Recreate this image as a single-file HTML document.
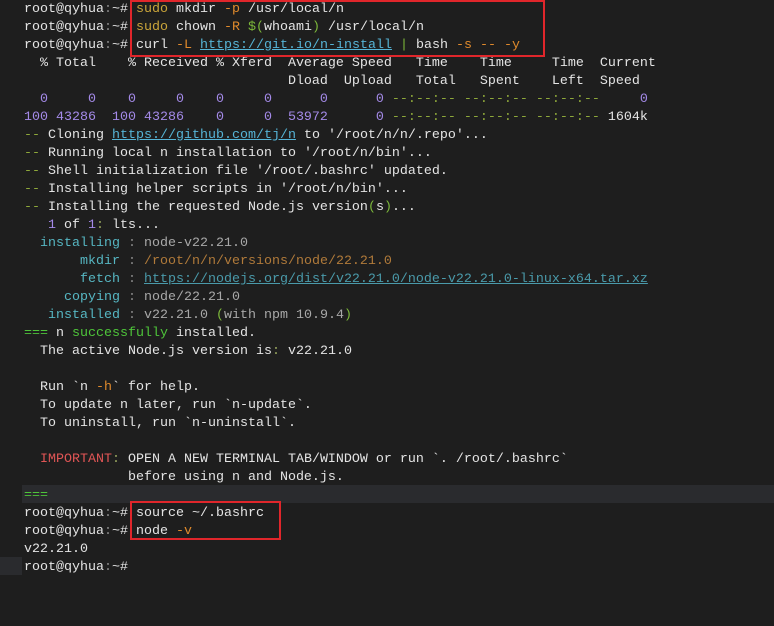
<!DOCTYPE html>
<html><head><meta charset="utf-8"><style>
html,body{margin:0;padding:0;background:#1e1e1e;width:774px;height:626px;overflow:hidden}
#t{position:absolute;left:24px;top:1px;font-family:"Liberation Mono",monospace;font-size:13.33px;line-height:18px;color:#e4e4e4;white-space:pre}
.y{color:#c9a43a}.o{color:#e08a2c}.g{color:#7cb83a}.u{color:#56b4d6;text-decoration:underline}
.p{color:#a48ae8}.d{color:#8ea83a}.c{color:#56b6c2}.s{color:#8a8a8a}.v{color:#a8a8a8}
.b{color:#b07a3a}.f{color:#4a9aaa;text-decoration:underline}.G{color:#4ec43a}.r{color:#e05555}.k{color:#9aa860}
.box{position:absolute;border:2px solid #e0262b}
.hl{position:absolute;background:#2a2b2e}
</style></head><body>
<div class="hl" style="left:22px;top:485px;width:752px;height:18px"></div>
<div class="hl" style="left:0;top:557px;width:22px;height:18px"></div>
<div id="t">root@qyhua<span class="s">:</span>~# <span class="y">sudo</span> mkdir <span class="o">-p</span> /usr/local/n
root@qyhua<span class="s">:</span>~# <span class="y">sudo</span> chown <span class="o">-R</span> <span class="g">$(</span>whoami<span class="g">)</span> /usr/local/n
root@qyhua<span class="s">:</span>~# curl <span class="o">-L</span> <span class="u">https://git.io/n-install</span> <span class="g">|</span> bash <span class="o">-s -- -y</span>
  % Total    % Received % Xferd  Average Speed   Time    Time     Time  Current
                                 Dload  Upload   Total   Spent    Left  Speed
<span class="p">  0     0    0     0    0     0      0      0</span> <span class="d">--:--:-- --:--:-- --:--:--</span>     <span class="p">0</span>
<span class="p">100 43286  100 43286    0     0  53972      0</span> <span class="d">--:--:-- --:--:-- --:--:--</span> 1604k
<span class="d">--</span> Cloning <span class="u">https://github.com/tj/n</span> to '/root/n/n/.repo'...
<span class="d">--</span> Running local n installation to '/root/n/bin'...
<span class="d">--</span> Shell initialization file '/root/.bashrc' updated.
<span class="d">--</span> Installing helper scripts in '/root/n/bin'...
<span class="d">--</span> Installing the requested Node.js version<span class="g">(</span>s<span class="g">)</span>...
   <span class="p">1</span> of <span class="p">1</span><span class="k">:</span> lts...
  <span class="c">installing</span> <span class="s">:</span> <span class="v">node-v22.21.0</span>
<span class="c">       mkdir</span> <span class="s">:</span> <span class="b">/root/n/n/versions/node/22.21.0</span>
<span class="c">       fetch</span> <span class="s">:</span> <span class="f">https://nodejs.org/dist/v22.21.0/node-v22.21.0-linux-x64.tar.xz</span>
<span class="c">     copying</span> <span class="s">:</span> <span class="v">node/22.21.0</span>
<span class="c">   installed</span> <span class="s">:</span> <span class="v">v22.21.0 </span><span class="g">(</span><span class="v">with npm 10.9.4</span><span class="g">)</span>
<span class="G">===</span> n <span class="G">successfully</span> installed.
  The active Node.js version is<span class="k">:</span> v22.21.0

  Run `n <span class="o">-h</span>` for help.
  To update n later, run `n-update`.
  To uninstall, run `n-uninstall`.

  <span class="r">IMPORTANT</span><span class="k">:</span> OPEN A NEW TERMINAL TAB/WINDOW or run `. /root/.bashrc`
             before using n and Node.js.
<span class="G">===</span>
root@qyhua<span class="s">:</span>~# source ~/.bashrc
root@qyhua<span class="s">:</span>~# node <span class="o">-v</span>
v22.21.0
root@qyhua<span class="s">:</span>~#</div>
<div class="box" style="left:130px;top:0;width:411px;height:53px"></div>
<div class="box" style="left:130px;top:501px;width:147px;height:35px"></div>
</body></html>
